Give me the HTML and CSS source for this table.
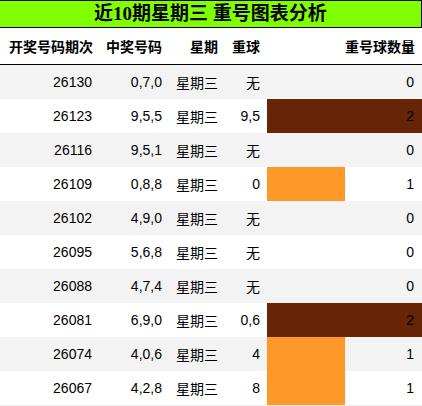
FILE: index.html
```html
<!DOCTYPE html>
<html lang="zh">
<head>
  <meta charset="UTF-8" />
  <title>近10期星期三 重号图表分析</title>
  <link rel="stylesheet" href="styles.css">
</head>
<body>

  <!-- 标题 -->
  <div class="title">近10期星期三 重号图表分析</div>

  <!-- 表格 -->
  <table class="chart">
    <colgroup>
      <col class="c-issue">
      <col class="c-nums">
      <col class="c-week">
      <col class="c-repeat">
      <col class="c-count">
    </colgroup>
    <thead>
      <tr><th>开奖号码期次</th><th>中奖号码</th><th>星期</th><th>重球</th><th>重号球数量</th></tr>
    </thead>
    <tbody>
      <tr><td>26130</td><td>0,7,0</td><td class="cjk">星期三</td><td class="cjk">无</td>
        <td class="bar-cell"><div class="bar-wrap"><div class="bar" style="width:0%"></div><span class="num">0</span></div></td></tr>
      <tr><td>26123</td><td>9,5,5</td><td class="cjk">星期三</td><td>9,5</td>
        <td class="bar-cell"><div class="bar-wrap"><div class="bar dark" style="width:100%"></div><span class="num">2</span></div></td></tr>
      <tr><td>26116</td><td>9,5,1</td><td class="cjk">星期三</td><td class="cjk">无</td>
        <td class="bar-cell"><div class="bar-wrap"><div class="bar" style="width:0%"></div><span class="num">0</span></div></td></tr>
      <tr><td>26109</td><td>0,8,8</td><td class="cjk">星期三</td><td>0</td>
        <td class="bar-cell"><div class="bar-wrap"><div class="bar" style="width:50%"></div><span class="num">1</span></div></td></tr>
      <tr><td>26102</td><td>4,9,0</td><td class="cjk">星期三</td><td class="cjk">无</td>
        <td class="bar-cell"><div class="bar-wrap"><div class="bar" style="width:0%"></div><span class="num">0</span></div></td></tr>
      <tr><td>26095</td><td>5,6,8</td><td class="cjk">星期三</td><td class="cjk">无</td>
        <td class="bar-cell"><div class="bar-wrap"><div class="bar" style="width:0%"></div><span class="num">0</span></div></td></tr>
      <tr><td>26088</td><td>4,7,4</td><td class="cjk">星期三</td><td class="cjk">无</td>
        <td class="bar-cell"><div class="bar-wrap"><div class="bar" style="width:0%"></div><span class="num">0</span></div></td></tr>
      <tr><td>26081</td><td>6,9,0</td><td class="cjk">星期三</td><td>0,6</td>
        <td class="bar-cell"><div class="bar-wrap"><div class="bar dark" style="width:100%"></div><span class="num">2</span></div></td></tr>
      <tr><td>26074</td><td>4,0,6</td><td class="cjk">星期三</td><td>4</td>
        <td class="bar-cell"><div class="bar-wrap"><div class="bar" style="width:50%"></div><span class="num">1</span></div></td></tr>
      <tr><td>26067</td><td>4,2,8</td><td class="cjk">星期三</td><td>8</td>
        <td class="bar-cell"><div class="bar-wrap"><div class="bar" style="width:50%"></div><span class="num">1</span></div></td></tr>
    </tbody>
  </table>

</body>
</html>
```

FILE: styles.css
```css
body {
  margin: 0;
  padding: 0;
  background: #fff;
  color: #000;
  font-family: 'Liberation Sans', 'Noto Sans CJK SC', sans-serif;
  font-size: 14px;
  width: 422px;
  overflow: hidden;
}

/* 标题 */
.title {
  height: 26px;
  line-height: 26px;
  margin-left: -1px;
  width: 421px;
  background: #80ff00;
  border: 1px solid #000;
  text-align: center;
  font-family: 'Liberation Serif', 'Noto Sans CJK SC', serif;
  font-size: 19px;
  font-weight: bold;
}

/* 表格 */
.chart {
  width: 422px;
  table-layout: fixed;
  border-collapse: collapse;
  border-bottom: 1px solid #ececec;
}

.c-issue { width: 99px; }
.c-nums { width: 70px; }
.c-week { width: 56px; }
.c-repeat { width: 42px; }
.c-count { width: 155px; }

th {
  height: 36px;
  padding: 0 7px;
  text-align: right;
  font-family: 'Noto Sans CJK SC', sans-serif;
  font-size: 14px;
  font-weight: bold;
  border-bottom: 1px solid #000;
  white-space: nowrap;
}

th:first-child {
  padding-right: 6px;
}

td {
  height: 34px;
  padding: 0 7px;
  text-align: right;
  white-space: nowrap;
}

td.cjk {
  font-family: 'Noto Sans CJK SC', sans-serif;
}

tbody tr:nth-child(odd) {
  background: #f3f3f3;
}

/* 柱形 */
.bar-cell {
  padding: 0;
}

.bar-wrap {
  display: grid;
  height: 34px;
}

.bar, .num {
  grid-area: 1 / 1;
}

.bar {
  height: 34px;
  background: #fe9929;
}

.bar.dark {
  background: #662506;
}

.num {
  align-self: center;
  justify-self: end;
  padding-right: 8px;
}
```
